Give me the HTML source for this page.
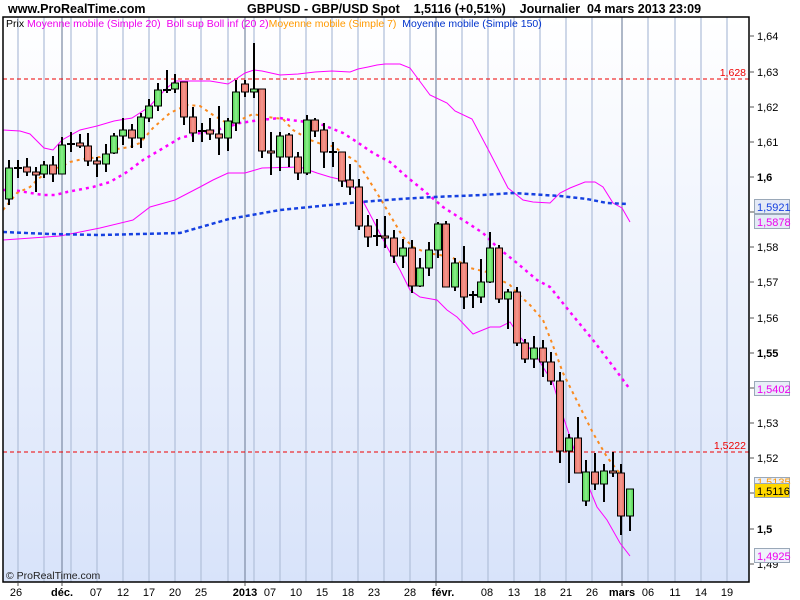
<!DOCTYPE html>
<html><head><meta charset="utf-8"><style>
body{margin:0;width:800px;height:600px;overflow:hidden;background:#fff;font-family:"Liberation Sans",sans-serif}
svg{display:block}
</style></head><body>
<svg width="800" height="600" xmlns="http://www.w3.org/2000/svg" font-family="Liberation Sans, sans-serif">
<defs>
<linearGradient id="bg" x1="0" y1="0" x2="0" y2="1"><stop offset="0" stop-color="#ffffff"/><stop offset="1" stop-color="#d8e3fa"/></linearGradient>
<linearGradient id="rd" x1="0" y1="0" x2="1" y2="0"><stop offset="0" stop-color="#e86a60"/><stop offset="0.5" stop-color="#f49a90"/><stop offset="1" stop-color="#e86a60"/></linearGradient>
<linearGradient id="gr" x1="0" y1="0" x2="1" y2="0"><stop offset="0" stop-color="#4cd04c"/><stop offset="0.5" stop-color="#8cf08c"/><stop offset="1" stop-color="#4cd04c"/></linearGradient>
<clipPath id="pc"><rect x="3" y="17" width="746" height="565"/></clipPath>
</defs>
<text x="8" y="13" font-size="12.5" font-weight="bold">www.ProRealTime.com</text>
<text x="247" y="13" font-size="12.5" font-weight="bold" xml:space="preserve">GBPUSD - GBP/USD Spot    1,5116 (+0,51%)    Journalier  04 mars 2013 23:09</text>
<rect x="3" y="17" width="746" height="565" fill="url(#bg)"/>
<g stroke="#b4c2dc" stroke-width="1.3">
<line x1="18" y1="17" x2="18" y2="582"/><line x1="44" y1="17" x2="44" y2="582"/><line x1="71" y1="17" x2="71" y2="582"/><line x1="97" y1="17" x2="97" y2="582"/><line x1="123" y1="17" x2="123" y2="582"/><line x1="149" y1="17" x2="149" y2="582"/><line x1="175" y1="17" x2="175" y2="582"/><line x1="201" y1="17" x2="201" y2="582"/><line x1="228" y1="17" x2="228" y2="582"/><line x1="254" y1="17" x2="254" y2="582"/><line x1="280" y1="17" x2="280" y2="582"/><line x1="306" y1="17" x2="306" y2="582"/><line x1="332" y1="17" x2="332" y2="582"/><line x1="358" y1="17" x2="358" y2="582"/><line x1="384" y1="17" x2="384" y2="582"/><line x1="410" y1="17" x2="410" y2="582"/><line x1="462" y1="17" x2="462" y2="582"/><line x1="488" y1="17" x2="488" y2="582"/><line x1="514" y1="17" x2="514" y2="582"/><line x1="540" y1="17" x2="540" y2="582"/><line x1="566" y1="17" x2="566" y2="582"/><line x1="592" y1="17" x2="592" y2="582"/><line x1="648" y1="17" x2="648" y2="582"/><line x1="675" y1="17" x2="675" y2="582"/><line x1="701" y1="17" x2="701" y2="582"/><line x1="727" y1="17" x2="727" y2="582"/>
</g>
<g stroke="#8492aa" stroke-width="1.3">
<line x1="62" y1="17" x2="62" y2="582"/><line x1="245" y1="17" x2="245" y2="582"/><line x1="436" y1="17" x2="436" y2="582"/><line x1="622" y1="17" x2="622" y2="582"/>
</g>
<g stroke="#e00" stroke-dasharray="4,3" stroke-width="1"><line x1="3" y1="79" x2="749" y2="79"/><line x1="3" y1="452" x2="749" y2="452"/></g>
<text x="746" y="76" font-size="10.5" fill="#e00" text-anchor="end">1,628</text>
<text x="746" y="449" font-size="10.5" fill="#e00" text-anchor="end">1,5222</text>
<g clip-path="url(#pc)" fill="none">
<polyline stroke="#f0f" stroke-width="1" points="3,130 20,131 30,134 44,148 53,150 62,140 80,130 97,126 114,121 132,118 149,107 158,97 167,88 175,81 193,81 210,81 228,84 236,79 245,73 254,70 262,71 280,75 298,74 315,72 332,71 350,72 358,69 368,67 377,65 385,64 400,64 410,68 430,95 447,103 455,111 472,119 490,153 508,188 523,200 533,202 550,203 560,193 570,188 585,182 595,182 603,187 613,203 622,208 630,222"/>
<polyline stroke="#f0f" stroke-width="1" points="3,240 60,236 100,228 133,220 150,207 175,200 200,187 213,180 228,173 245,173 262,168 300,167 317,173 330,177 343,180 357,190 373,220 387,247 400,270 410,290 420,297 437,300 447,310 457,317 473,334 490,327 500,327 510,322 520,337 537,357 543,367 553,383 560,407 570,437 580,467 590,490 597,507 607,520 620,543 630,556"/>
<polyline stroke="#f0f" stroke-width="2.5" stroke-dasharray="3,4" points="3,190 13,190 43,195 55,195 67,192 93,187 110,182 127,172 143,160 160,150 180,138 200,133 217,130 240,123 260,120 280,118 290,120 307,122 323,125 343,133 357,142 373,153 390,162 407,177 423,190 443,207 463,220 483,233 497,247 517,263 537,280 550,287 570,312 593,340 612,365 629,388"/>
<polyline stroke="#fa8a1e" stroke-width="2" stroke-dasharray="3,4" points="3,210 17,193 30,187 37,180 47,172 60,167 70,162 83,159 100,157 117,149 130,147 140,143 153,128 170,113 187,105 200,106 213,115 227,123 240,120 253,114 267,117 283,119 293,130 310,140 327,146 333,146 343,153 357,162 367,177 380,198 390,215 403,237 413,247 427,253 440,255 453,258 470,268 487,272 497,278 510,285 517,293 530,305 543,320 552,343 563,373 580,407 593,433 607,457 617,470 627,480"/>
<polyline stroke="#1540e0" stroke-width="2.5" stroke-dasharray="4,3" points="3,232 50,234 100,235 140,234 180,233 229,219 280,210 330,205 360,202 400,199 433,197 483,195 513,193 560,196 587,199 607,203 628,204"/>
</g>
<g stroke="#000" stroke-width="1">
<g id="c" stroke-width="2">
<line x1="9" y1="160" x2="9" y2="205"/><line x1="18" y1="160" x2="18" y2="178"/><line x1="27" y1="158" x2="27" y2="176"/><line x1="36" y1="167" x2="36" y2="192"/><line x1="44" y1="161" x2="44" y2="178"/><line x1="53" y1="156" x2="53" y2="182"/><line x1="62" y1="137" x2="62" y2="174"/><line x1="71" y1="132" x2="71" y2="152"/><line x1="80" y1="134" x2="80" y2="148"/><line x1="88" y1="133" x2="88" y2="166"/><line x1="97" y1="157" x2="97" y2="177"/><line x1="106" y1="144" x2="106" y2="172"/><line x1="114" y1="133" x2="114" y2="154"/><line x1="123" y1="118" x2="123" y2="145"/><line x1="132" y1="124" x2="132" y2="148"/><line x1="141" y1="113" x2="141" y2="148"/><line x1="149" y1="99" x2="149" y2="122"/><line x1="158" y1="83" x2="158" y2="111"/><line x1="167" y1="70" x2="167" y2="93"/><line x1="175" y1="74" x2="175" y2="93"/><line x1="184" y1="82" x2="184" y2="125"/><line x1="193" y1="107" x2="193" y2="142"/><line x1="202" y1="123" x2="202" y2="142"/><line x1="210" y1="118" x2="210" y2="140"/><line x1="219" y1="106" x2="219" y2="155"/><line x1="228" y1="118" x2="228" y2="151"/><line x1="236" y1="80" x2="236" y2="131"/><line x1="245" y1="80" x2="245" y2="97"/><line x1="254" y1="43" x2="254" y2="98"/><line x1="262" y1="89" x2="262" y2="158"/><line x1="271" y1="132" x2="271" y2="175"/><line x1="280" y1="132" x2="280" y2="171"/><line x1="289" y1="133" x2="289" y2="167"/><line x1="298" y1="152" x2="298" y2="180"/><line x1="307" y1="115" x2="307" y2="175"/><line x1="315" y1="118" x2="315" y2="137"/><line x1="324" y1="123" x2="324" y2="168"/><line x1="333" y1="142" x2="333" y2="167"/><line x1="342" y1="152" x2="342" y2="187"/><line x1="350" y1="164" x2="350" y2="195"/><line x1="359" y1="179" x2="359" y2="230"/><line x1="368" y1="215" x2="368" y2="247"/><line x1="377" y1="219" x2="377" y2="246"/><line x1="385" y1="216" x2="385" y2="248"/><line x1="394" y1="230" x2="394" y2="263"/><line x1="403" y1="239" x2="403" y2="268"/><line x1="412" y1="240" x2="412" y2="293"/><line x1="420" y1="258" x2="420" y2="287"/><line x1="429" y1="242" x2="429" y2="276"/><line x1="438" y1="222" x2="438" y2="258"/><line x1="446" y1="221" x2="446" y2="287"/><line x1="455" y1="258" x2="455" y2="291"/><line x1="464" y1="246" x2="464" y2="309"/><line x1="473" y1="291" x2="473" y2="308"/><line x1="481" y1="259" x2="481" y2="303"/><line x1="490" y1="232" x2="490" y2="283"/><line x1="499" y1="245" x2="499" y2="303"/><line x1="508" y1="289" x2="508" y2="329"/><line x1="517" y1="287" x2="517" y2="346"/><line x1="525" y1="339" x2="525" y2="363"/><line x1="534" y1="336" x2="534" y2="368"/><line x1="543" y1="340" x2="543" y2="377"/><line x1="551" y1="352" x2="551" y2="385"/><line x1="560" y1="372" x2="560" y2="463"/><line x1="569" y1="434" x2="569" y2="483"/><line x1="578" y1="417" x2="578" y2="473"/><line x1="586" y1="460" x2="586" y2="506"/><line x1="595" y1="453" x2="595" y2="490"/><line x1="604" y1="464" x2="604" y2="502"/><line x1="613" y1="452" x2="613" y2="477"/><line x1="621" y1="464" x2="621" y2="535"/><line x1="630" y1="489" x2="630" y2="531"/>
</g>
<g fill="url(#gr)">
<rect x="5.5" y="168" width="7" height="31"/><rect x="40.5" y="165" width="7" height="9"/><rect x="58.5" y="145" width="7" height="29"/><rect x="102.5" y="154" width="7" height="10"/><rect x="110.5" y="136" width="7" height="17"/><rect x="119.5" y="130" width="7" height="6"/><rect x="137.5" y="117" width="7" height="21"/><rect x="145.5" y="106" width="7" height="12"/><rect x="154.5" y="90" width="7" height="16"/><rect x="171.5" y="83" width="7" height="6"/><rect x="224.5" y="121" width="7" height="17"/><rect x="232.5" y="92" width="7" height="31"/><rect x="250.5" y="89" width="7" height="3"/><rect x="276.5" y="136" width="7" height="21"/><rect x="303.5" y="120" width="7" height="53"/><rect x="399.5" y="248" width="7" height="8"/><rect x="416.5" y="268" width="7" height="18"/><rect x="425.5" y="250" width="7" height="18"/><rect x="434.5" y="224" width="7" height="26"/><rect x="451.5" y="263" width="7" height="24"/><rect x="477.5" y="282" width="7" height="15"/><rect x="486.5" y="248" width="7" height="34"/><rect x="504.5" y="292" width="7" height="7"/><rect x="530.5" y="348" width="7" height="11"/><rect x="565.5" y="438" width="7" height="13"/><rect x="582.5" y="472" width="7" height="29"/><rect x="600.5" y="471" width="7" height="13"/><rect x="626.5" y="489" width="7" height="27"/>
</g>
<g fill="url(#rd)">
<rect x="23.5" y="167" width="7" height="5"/><rect x="32.5" y="172" width="7" height="3"/><rect x="49.5" y="165" width="7" height="9"/><rect x="76.5" y="143" width="7" height="3"/><rect x="84.5" y="146" width="7" height="15"/><rect x="93.5" y="161" width="7" height="3"/><rect x="128.5" y="130" width="7" height="8"/><rect x="180.5" y="82" width="7" height="35"/><rect x="189.5" y="117" width="7" height="16"/><rect x="206.5" y="130" width="7" height="4"/><rect x="215.5" y="134" width="7" height="4"/><rect x="241.5" y="84" width="7" height="8"/><rect x="258.5" y="89" width="7" height="62"/><rect x="267.5" y="151" width="7" height="2"/><rect x="285.5" y="135" width="7" height="22"/><rect x="294.5" y="157" width="7" height="16"/><rect x="311.5" y="120" width="7" height="11"/><rect x="320.5" y="130" width="7" height="22"/><rect x="338.5" y="152" width="7" height="29"/><rect x="346.5" y="180" width="7" height="7"/><rect x="355.5" y="187" width="7" height="39"/><rect x="364.5" y="226" width="7" height="11"/><rect x="381.5" y="236" width="7" height="2"/><rect x="390.5" y="238" width="7" height="18"/><rect x="408.5" y="248" width="7" height="38"/><rect x="442.5" y="224" width="7" height="63"/><rect x="460.5" y="263" width="7" height="34"/><rect x="495.5" y="248" width="7" height="51"/><rect x="513.5" y="292" width="7" height="51"/><rect x="521.5" y="343" width="7" height="16"/><rect x="539.5" y="348" width="7" height="14"/><rect x="547.5" y="362" width="7" height="19"/><rect x="556.5" y="381" width="7" height="70"/><rect x="574.5" y="438" width="7" height="35"/><rect x="591.5" y="472" width="7" height="12"/><rect x="609.5" y="471" width="7" height="2"/><rect x="617.5" y="473" width="7" height="43"/>
</g>
<g stroke-width="2"><line x1="14" y1="168" x2="22" y2="168"/><line x1="67" y1="144" x2="75" y2="144"/><line x1="163" y1="90" x2="171" y2="90"/><line x1="198" y1="131" x2="206" y2="131"/><line x1="329" y1="152" x2="337" y2="152"/><line x1="373" y1="236" x2="381" y2="236"/><line x1="469" y1="295" x2="477" y2="295"/></g>
</g>
<rect x="3" y="17" width="746" height="565" fill="none" stroke="#000" stroke-width="1.5"/>
<text x="6" y="27" font-size="10.5" xml:space="preserve"><tspan fill="#000">Prix </tspan><tspan fill="#e0e">Moyenne mobile (Simple 20)  Boll sup Boll inf (20 2)</tspan><tspan fill="#f90">Moyenne mobile (Simple 7)  </tspan><tspan fill="#03c">Moyenne mobile (Simple 150)</tspan></text>
<text x="6" y="579" font-size="10.5" fill="#222">© ProRealTime.com</text>
<g stroke="#555" stroke-width="1">
<line x1="750" y1="36" x2="754" y2="36"/><line x1="750" y1="72" x2="754" y2="72"/><line x1="750" y1="107" x2="754" y2="107"/><line x1="750" y1="142" x2="754" y2="142"/><line x1="750" y1="177" x2="754" y2="177"/><line x1="750" y1="212" x2="754" y2="212"/><line x1="750" y1="247" x2="754" y2="247"/><line x1="750" y1="282" x2="754" y2="282"/><line x1="750" y1="318" x2="754" y2="318"/><line x1="750" y1="353" x2="754" y2="353"/><line x1="750" y1="388" x2="754" y2="388"/><line x1="750" y1="423" x2="754" y2="423"/><line x1="750" y1="458" x2="754" y2="458"/><line x1="750" y1="493" x2="754" y2="493"/><line x1="750" y1="529" x2="754" y2="529"/><line x1="750" y1="564" x2="754" y2="564"/>
</g>
<g font-size="11" fill="#000">
<text x="757" y="40">1,64</text><text x="757" y="76">1,63</text><text x="757" y="111">1,62</text><text x="757" y="146">1,61</text><text x="757" y="181" font-weight="bold">1,6</text><text x="757" y="251">1,58</text><text x="757" y="286">1,57</text><text x="757" y="322">1,56</text><text x="757" y="357" font-weight="bold">1,55</text><text x="757" y="427">1,53</text><text x="757" y="462">1,52</text><text x="757" y="533" font-weight="bold">1,5</text><text x="757" y="568">1,49</text>
</g>
<g font-size="11">
<rect x="754.5" y="199.5" width="35" height="14" fill="#e4eaf6" stroke="#9aa8b8"/><text x="757" y="211" fill="#1540e0">1,5921</text>
<rect x="754.5" y="214.5" width="35" height="14" fill="#e4eaf6" stroke="#9aa8b8"/><text x="757" y="226" fill="#e0e">1,5878</text>
<rect x="754.5" y="381.5" width="35" height="14" fill="#e8eef8" stroke="#9aa8b8"/><text x="757" y="393" fill="#e0e">1,5402</text>
<rect x="754.5" y="477.5" width="35" height="6" fill="#e8eef8" stroke="#9aa8b8"/><text x="757" y="486" fill="#f90">1,5135</text>
<rect x="754.5" y="483.5" width="35" height="14" fill="#ffd800" stroke="#9aa8b8"/><text x="757" y="495" fill="#000">1,5116</text>
<rect x="754.5" y="548.5" width="35" height="14" fill="#eef2fa" stroke="#9aa8b8"/><text x="757" y="560" fill="#e0e">1,4925</text>
</g>
<g stroke="#555"><line x1="18" y1="583" x2="18" y2="586"/><line x1="62" y1="583" x2="62" y2="586"/><line x1="245" y1="583" x2="245" y2="586"/><line x1="436" y1="583" x2="436" y2="586"/><line x1="622" y1="583" x2="622" y2="586"/></g>
<g font-size="11" text-anchor="middle" fill="#000">
<text x="16" y="596">26</text><text x="62" y="596" font-weight="bold">déc.</text><text x="96" y="596">07</text><text x="123" y="596">12</text><text x="149" y="596">17</text><text x="175" y="596">20</text><text x="201" y="596">25</text><text x="245" y="596" font-weight="bold">2013</text><text x="270" y="596">07</text><text x="296" y="596">10</text><text x="322" y="596">15</text><text x="348" y="596">18</text><text x="374" y="596">23</text><text x="410" y="596">28</text><text x="443" y="596" font-weight="bold">févr.</text><text x="487" y="596">08</text><text x="514" y="596">13</text><text x="540" y="596">18</text><text x="566" y="596">21</text><text x="592" y="596">26</text><text x="622" y="596" font-weight="bold">mars</text><text x="648" y="596">06</text><text x="675" y="596">11</text><text x="701" y="596">14</text><text x="727" y="596">19</text>
</g>
</svg>
</body></html>
